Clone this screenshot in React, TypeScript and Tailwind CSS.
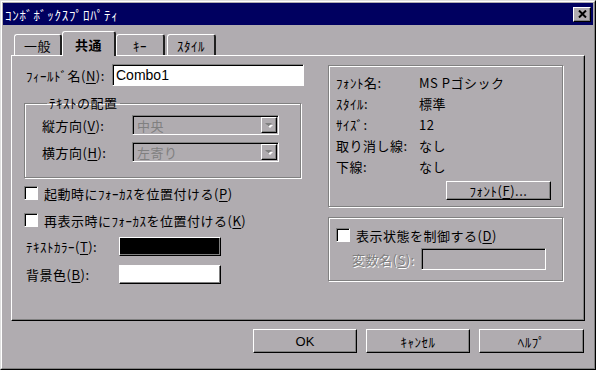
import React from "react";

const raised =
  "border border-t-white border-l-white border-r-black border-b-black shadow-[inset_-1px_-1px_0_#808080] bg-[#b0acb0]";
const sunken =
  "border border-t-[#808080] border-l-[#808080] border-r-white border-b-white shadow-[inset_1px_1px_0_#000]";
const etched =
  "border border-[#808080] shadow-[inset_1px_1px_0_#fff,1px_1px_0_#fff]";

function Acc({ k }: { k: string }) {
  return (
    <>
      (<span className="underline underline-offset-2">{k}</span>)
    </>
  );
}

function Checkbox() {
  return <div className={`w-[14px] h-[14px] bg-white shrink-0 ${sunken}`} />;
}

function Combo({ value }: { value: string }) {
  return (
    <div className={`w-[147px] h-[20px] flex items-center ${sunken}`}>
      <span className="flex-1 pl-[4px] text-[#808080]">{value}</span>
      <div className={`w-[16px] h-[16px] mr-[1px] flex items-center justify-center ${raised}`}>
        <svg width="8" height="5" viewBox="0 0 8 5">
          <path d="M1 1h6l-3 3z" fill="#fff" transform="translate(1 1)" />
          <path d="M0 0h7l-3.5 3.5z" fill="#808080" />
        </svg>
      </div>
    </div>
  );
}

function Tab({ label, active, w }: { label: string; active?: boolean; w: string }) {
  return (
    <div
      className={`${w} ${
        active ? "h-[25px] -mb-[1px] z-10 font-bold" : "h-[21px]"
      } relative flex items-center justify-center bg-[#b0acb0] border-t border-l border-t-white border-l-white border-r-2 border-r-[#202020] rounded-t-[3px]`}
    >
      {label}
    </div>
  );
}

const fontRows: [string, string][] = [
  ["ﾌｫﾝﾄ名:", "MS Pゴシック"],
  ["ｽﾀｲﾙ:", "標準"],
  ["ｻｲｽﾞ:", "12"],
  ["取り消し線:", "なし"],
  ["下線:", "なし"],
];

export default function App() {
  return (
    <div className="w-[596px] h-[370px] bg-[#b0acb0] text-[13px] leading-none tracking-[0.5px] text-black font-['Noto_Sans_CJK_JP',sans-serif] border border-t-[#dfdfdf] border-l-[#dfdfdf] border-r-black border-b-black">
      <div className="h-full flex flex-col border border-t-white border-l-white border-r-[#808080] border-b-[#808080] p-[1px]">
        {/* title bar */}
        <div className="h-[22px] bg-[#000060] flex items-center justify-between pl-[2px] pr-[2px]">
          <span className="text-white text-[13px] tracking-[0.8px]">ｺﾝﾎﾞﾎﾞｯｸｽﾌﾟﾛﾊﾟﾃｨ</span>
          <div className={`w-[18px] h-[15px] flex items-center justify-center ${raised}`}>
            <svg width="9" height="8" viewBox="0 0 9 8">
              <path d="M1 0.5l7 7M8 0.5l-7 7" stroke="#000" strokeWidth="2" />
            </svg>
          </div>
        </div>

        <div className="flex-1 flex flex-col px-[8px]">
          {/* tabs */}
          <div className="h-[24px] mt-[6px] flex items-end pl-[3px]">
            <Tab label="一般" w="w-[48px]" />
            <Tab label="共通" w="w-[54px]" active />
            <Tab label="ｷｰ" w="w-[49px]" />
            <Tab label="ｽﾀｲﾙ" w="w-[49px] ml-[2px]" />
          </div>

          {/* panel */}
          <div className="h-[266px] flex pl-[12px] border border-t-white border-l-white border-r-black border-b-black shadow-[inset_-1px_-1px_0_#808080]">
            {/* left column */}
            <div className="w-[280px] flex flex-col">
              <div className="mt-[8px] h-[22px] flex items-center">
                <span className="w-[88px] pl-[2px]">
                  ﾌｨｰﾙﾄﾞ名<Acc k="N" />:
                </span>
                <div className={`flex-1 h-[22px] bg-white flex items-center pl-[3px] tracking-normal font-['Liberation_Sans',sans-serif] text-[14px] ${sunken}`}>
                  Combo1
                </div>
              </div>

              <fieldset className={`mt-[9px] w-[277px] ${etched} pl-[17px] pb-[15px]`}>
                <legend className="ml-[5px] px-[2px] leading-[16px]">ﾃｷｽﾄの配置</legend>
                <div className="mt-[4px] h-[20px] flex items-center">
                  <span className="w-[90px]">
                    縦方向<Acc k="V" />:
                  </span>
                  <Combo value="中央" />
                </div>
                <div className="mt-[7px] h-[20px] flex items-center">
                  <span className="w-[90px]">
                    横方向<Acc k="H" />:
                  </span>
                  <Combo value="左寄り" />
                </div>
              </fieldset>

              <div className="mt-[7px] h-[16px] flex items-center gap-[6px]">
                <Checkbox />
                <span>
                  起動時にﾌｫｰｶｽを位置付ける<Acc k="P" />
                </span>
              </div>
              <div className="mt-[11px] h-[16px] flex items-center gap-[6px]">
                <Checkbox />
                <span>
                  再表示時にﾌｫｰｶｽを位置付ける<Acc k="K" />
                </span>
              </div>

              <div className="mt-[9px] h-[19px] flex items-center">
                <span className="w-[95px] pl-[2px]">
                  ﾃｷｽﾄｶﾗｰ<Acc k="T" />:
                </span>
                <div className={`w-[102px] h-[19px] ${raised} !bg-black`} />
              </div>
              <div className="mt-[9px] h-[19px] flex items-center">
                <span className="w-[95px] pl-[2px]">
                  背景色<Acc k="B" />:
                </span>
                <div className={`w-[102px] h-[19px] ${raised} !bg-white`} />
              </div>
            </div>

            {/* right column */}
            <div className="w-[235px] ml-[24px] flex flex-col">
              <div className={`mt-[9px] h-[142px] flex flex-col pt-[6px] pl-[7px] ${etched}`}>
                {fontRows.map(([k, v]) => (
                  <div key={k} className="h-[21px] flex items-center">
                    <span className="w-[83px]">{k}</span>
                    <span>{v}</span>
                  </div>
                ))}
                <div className="mt-[4px] flex justify-end pr-[11px]">
                  <div className={`w-[105px] h-[19px] flex items-center justify-center ${raised}`}>
                    ﾌｫﾝﾄ<Acc k="F" />...
                  </div>
                </div>
              </div>

              <div className={`mt-[10px] h-[64px] flex flex-col pl-[7px] ${etched}`}>
                <div className="mt-[9px] h-[16px] flex items-center gap-[6px]">
                  <Checkbox />
                  <span>
                    表示状態を制御する<Acc k="D" />
                  </span>
                </div>
                <div className="mt-[5px] h-[22px] flex items-center">
                  <span className="w-[85px] pl-[16px] text-[#808080] [text-shadow:1px_1px_0_#fff]">
                    変数名<Acc k="S" />:
                  </span>
                  <div className={`w-[125px] h-[22px] ${sunken}`} />
                </div>
              </div>
            </div>
          </div>

          {/* buttons */}
          <div className="mt-[8px] flex justify-end gap-[9px] pr-[1px]">
            <div className={`w-[104px] h-[24px] flex items-center justify-center tracking-normal font-['Liberation_Sans',sans-serif] ${raised}`}>
              OK
            </div>
            <div className={`w-[104px] h-[24px] flex items-center justify-center ${raised}`}>ｷｬﾝｾﾙ</div>
            <div className={`w-[105px] h-[24px] flex items-center justify-center ${raised}`}>ﾍﾙﾌﾟ</div>
          </div>
        </div>
      </div>
    </div>
  );
}
